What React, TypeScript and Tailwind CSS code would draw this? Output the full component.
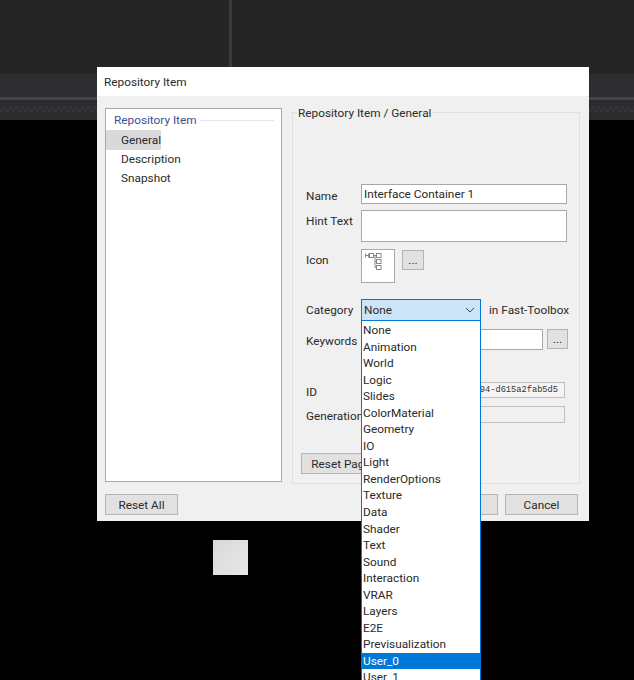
import React from 'react';

const categories = [
  'None', 'Animation', 'World', 'Logic', 'Slides', 'ColorMaterial', 'Geometry', 'IO', 'Light',
  'RenderOptions', 'Texture', 'Data', 'Shader', 'Text', 'Sound', 'Interaction', 'VRAR', 'Layers',
  'E2E', 'Previsualization', 'User_0', 'User_1',
];

const Field: React.FC<{ label: string; labelClass: string; className: string; children: React.ReactNode }> = ({
  label,
  labelClass,
  className,
  children,
}) => (
  <div className={`flex items-start ${className}`}>
    <span className={`w-[55px] shrink-0 whitespace-nowrap ${labelClass}`}>{label}</span>
    {children}
  </div>
);

const DialogButton: React.FC<{ label: string; className?: string }> = ({ label, className }) => (
  <div className={`flex items-center justify-center border border-[#b4b4b4] bg-[#e1e1e1] ${className}`}>
    {label}
  </div>
);

const App: React.FC = () => {
  return (
    <div className="relative h-[680px] w-[634px] overflow-hidden bg-black font-['Roboto',sans-serif] text-[11.8px] leading-[16px] text-[#2a2a2a]">
      {/* dark editor behind the dialog */}
      <div className="flex h-[74px] bg-[#252526]">
        <div className="w-[229px]" />
        <div className="w-[3px] bg-[#3a3a3c]" />
      </div>
      <div className="h-[23px] bg-[#2d2d30]" />
      <div className="h-[3px] bg-[#444446]" />
      <div className="h-[6px] bg-[#2b2b2d]" />
      <div className="h-[6px] bg-[repeating-conic-gradient(#363638_0_25%,#2b2b2d_0_50%)] bg-[length:6px_6px]" />
      <div className="h-[8px] bg-[#2b2b2d]" />

      <div className="absolute left-[213px] top-[540px] h-[35px] w-[35px] bg-gradient-to-br from-[#d8d8d8] to-[#e8e8e8]" />

      {/* dialog */}
      <div className="absolute left-[97px] top-[67px] flex h-[454px] w-[492px] flex-col bg-[#f0f0f0]">
        <div className="flex h-[29px] shrink-0 items-center bg-white pl-[7px]">Repository Item</div>

        <div className="flex px-[8px] pt-[12px]">
          <div className="h-[374px] w-[177px] shrink-0 border border-[#a8a8a8] bg-white pt-[1px]">
            <div className="flex h-[20px] items-center pl-[8px] text-[#3d4f96]">
              <span className="whitespace-nowrap">Repository Item</span>
              <div className="ml-[3px] mr-[7px] h-px flex-1 bg-[#e2e6f2]" />
            </div>
            <div className="h-[20px] w-[55px] bg-[#d9d9d9] pl-[15px] leading-[20px]">General</div>
            <div className="h-[19px] pl-[15px] leading-[19px]">Description</div>
            <div className="h-[19px] pl-[15px] leading-[19px]">Snapshot</div>
          </div>

          <div className="relative ml-[10px] mt-[4px] h-[372px] w-[288px] border border-[#e0e0e0] pl-[13px] pt-[71px]">
            <span className="absolute -top-[8px] left-[4px] bg-[#f0f0f0] px-[1px]">Repository Item / General</span>

            <Field label="Name" labelClass="pt-[4px]" className="h-[20px]">
              <div className="h-[20px] w-[206px] border border-[#a8a8a8] bg-white pl-[2px] pt-[1px]">
                Interface Container 1
              </div>
            </Field>
            <Field label="Hint Text" labelClass="pt-[3px]" className="mt-[6px] h-[32px]">
              <div className="h-[32px] w-[206px] border border-[#a8a8a8] bg-white" />
            </Field>
            <Field label="Icon" labelClass="pt-[3px]" className="mt-[7px] h-[34px]">
              <div className="h-[34px] w-[34px] border border-[#a8a8a8] bg-white">
                <svg width="32" height="32" viewBox="0 0 32 32" fill="none" stroke="#888" strokeWidth="1">
                  <path d="M3.5 3.5v4M6.5 3.5v4M3.5 5.5h4M11.5 5.5h3M13 5.5v12M13 11.5h1.5M13 17.5h1.5" />
                  <rect x="7.5" y="3.5" width="4" height="4" />
                  <rect x="14.5" y="3.5" width="4.5" height="4" />
                  <rect x="14.5" y="9.5" width="4.5" height="4" />
                  <rect x="14.5" y="15.5" width="4.5" height="4" />
                </svg>
              </div>
              <DialogButton label="..." className="ml-[7px] mt-[1px] h-[20px] w-[22px]" />
            </Field>
            <Field label="Category" labelClass="pt-[3px]" className="mt-[16px] h-[22px]">
              <div className="flex h-[22px] w-[120px] items-center justify-between border border-[#0078d7] bg-[#cce4f7] pl-[2px] pr-[5px]">
                None
                <svg width="10" height="6" viewBox="0 0 10 6" fill="none" stroke="#444" strokeWidth="1">
                  <path d="M1 1l4 4 4-4" />
                </svg>
              </div>
              <span className="ml-[8px] whitespace-nowrap pt-[3px]">in Fast-Toolbox</span>
            </Field>
            <Field label="Keywords" labelClass="pt-[4px]" className="mt-[8px] h-[21px]">
              <div className="h-[21px] w-[182px] border border-[#a8a8a8] bg-white" />
              <DialogButton label="..." className="ml-[4px] h-[20px] w-[21px]" />
            </Field>
            <Field label="ID" labelClass="pt-[2px]" className="mt-[32px] h-[16px]">
              <div className="h-[16px] w-[204px] border border-[#c0c0c0] bg-[#f4f4f4] pr-[6px] text-right font-['Liberation_Mono',monospace] text-[8.7px] leading-[14px] text-[#333]">
                94-d615a2fab5d5
              </div>
            </Field>
            <Field label="Generation" labelClass="pt-[2px]" className="mt-[8px] h-[17px]">
              <div className="h-[17px] w-[204px] border border-[#c0c0c0] bg-[#f0f0f0]" />
            </Field>
            <DialogButton label="Reset Page" className="-ml-[5px] mt-[30px] h-[21px] w-[80px]" />
          </div>
        </div>

        <div className="flex px-[8px] pt-[10px]">
          <DialogButton label="Reset All" className="h-[21px] w-[73px]" />
          <DialogButton label="OK" className="ml-auto h-[21px] w-[73px]" />
          <DialogButton label="Cancel" className="ml-[7px] mr-[3px] h-[21px] w-[73px]" />
        </div>
      </div>

      {/* open category list */}
      <div className="absolute left-[361px] top-[321px] w-[120px] border-x border-[#0078d7] bg-white pt-[1px]">
        {categories.map(name => (
          <div
            key={name}
            className={`h-[16.55px] pl-[1px] leading-[17px] ${name === 'User_0' ? 'bg-[#0078d7] text-white' : ''}`}
          >
            {name}
          </div>
        ))}
      </div>
    </div>
  );
};

export default App;
